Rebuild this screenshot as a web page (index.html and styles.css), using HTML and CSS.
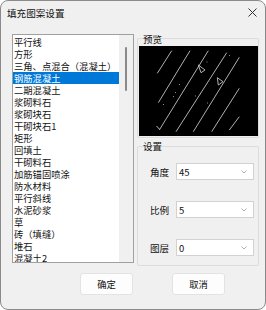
FILE: index.html
```html
<!DOCTYPE html>
<html>
<head>
<meta charset="utf-8">
<link rel="stylesheet" href="styles.css">
</head>
<body>
<div class="window">
  <div class="titlebar">
    <span class="title">填充图案设置</span>
    <svg class="close" width="9" height="9" viewBox="0 0 9 9"><path d="M0.5 0.5L8.5 8.5M8.5 0.5L0.5 8.5" stroke="#333" stroke-width="1" fill="none"/></svg>
  </div>
  <div class="body">
    <div class="list">
      <div class="items">
        <div class="item">平行线</div>
        <div class="item">方形</div>
        <div class="item">三角、点混合（混凝土）</div>
        <div class="item selected">钢筋混凝土</div>
        <div class="item">二期混凝土</div>
        <div class="item">浆砌料石</div>
        <div class="item">浆砌块石</div>
        <div class="item">干砌块石1</div>
        <div class="item">矩形</div>
        <div class="item">回填土</div>
        <div class="item">干砌料石</div>
        <div class="item">加筋锚固喷涂</div>
        <div class="item">防水材料</div>
        <div class="item">平行斜线</div>
        <div class="item">水泥砂浆</div>
        <div class="item">草</div>
        <div class="item">砖（填缝）</div>
        <div class="item">堆石</div>
        <div class="item">混凝土2</div>
      </div>
      <div class="scrollbar"><div class="thumb"></div></div>
    </div>
    <div class="right">
      <div class="group preview-group">
        <div class="legend">预览</div>
        <div class="canvas">
          <svg width="119" height="90" viewBox="0 0 119 90">
            <g stroke="#c4c4c4" stroke-width="0.9" fill="none">
              <line x1="18.3" y1="27.3" x2="32.7" y2="4.7"/>
              <line x1="19.3" y1="56.7" x2="51" y2="4.7"/>
              <line x1="20.3" y1="84" x2="69.3" y2="4.7"/>
              <line x1="37" y1="85.7" x2="87.7" y2="6.7"/>
              <line x1="54.3" y1="85.7" x2="100.3" y2="11.3"/>
              <line x1="72.7" y1="85.7" x2="100.3" y2="42.3"/>
              <line x1="90.3" y1="84" x2="100.3" y2="70.7"/>
              <line x1="17.5" y1="80" x2="20.3" y2="83"/>
              <polygon points="59.3,19 62,26.7 66,24"/>
              <polygon points="78.3,31.7 79.3,39 84,35.7"/>
            </g>
            <g fill="#8a8a8a">
              <rect x="67.5" y="15.5" width="1" height="1"/>
              <rect x="40" y="38" width="1" height="1"/>
              <rect x="34" y="50" width="1" height="1"/>
              <rect x="56" y="49.5" width="1" height="1"/>
              <rect x="68" y="56.5" width="1" height="1"/>
              <rect x="24" y="58" width="1" height="1"/>
              <rect x="90" y="9" width="1" height="1"/>
              <rect x="36" y="46" width="1" height="1"/>
            </g>
          </svg>
        </div>
      </div>
      <div class="group settings-group">
        <div class="legend">设置</div>
        <div class="row first">
          <span class="label">角度</span>
          <div class="select"><span>45</span><svg width="6" height="4" viewBox="0 0 6 4"><polyline points="0.5,0.5 3,3 5.5,0.5" stroke="#9a9a9a" stroke-width="0.8" fill="none"/></svg></div>
        </div>
        <div class="row">
          <span class="label">比例</span>
          <div class="select"><span>5</span><svg width="6" height="4" viewBox="0 0 6 4"><polyline points="0.5,0.5 3,3 5.5,0.5" stroke="#9a9a9a" stroke-width="0.8" fill="none"/></svg></div>
        </div>
        <div class="row">
          <span class="label">图层</span>
          <div class="select"><span>0</span><svg width="6" height="4" viewBox="0 0 6 4"><polyline points="0.5,0.5 3,3 5.5,0.5" stroke="#9a9a9a" stroke-width="0.8" fill="none"/></svg></div>
        </div>
      </div>
    </div>
  </div>
  <div class="footer">
    <div class="btn">确定</div>
    <div class="btn">取消</div>
  </div>
</div>
</body>
</html>
```

FILE: styles.css
```css
* { box-sizing: border-box; }
html, body {
  margin: 0;
  padding: 0;
  width: 266px;
  height: 310px;
  background: #ffffff;
  overflow: hidden;
}
body {
  font-family: "Noto Sans CJK SC", "Noto Sans", sans-serif;
  color: #1a1a1a;
  font-size: 9.3px;
}
.window {
  width: 266px;
  height: 310px;
  border: 1px solid #8a8a8a;
  border-radius: 8px;
  background: #f0f0f0;
  overflow: hidden;
  display: flex;
  flex-direction: column;
}
.titlebar {
  height: 23px;
  display: flex;
  align-items: center;
  justify-content: space-between;
  padding: 0 8px 0 6px;
}
.title {
  font-size: 9.6px;
  line-height: 12px;
  color: #111;
}
.close { display: block; margin-top: 0; }
.body {
  display: flex;
  padding: 10px 0 0 11px;
}
.list {
  width: 122px;
  height: 229px;
  border: 1px solid #a0a0a0;
  background: #ffffff;
  display: flex;
  overflow: hidden;
}
.items {
  width: 106px;
  padding-top: 1px;
  overflow: hidden;
}
.item {
  height: 12px;
  line-height: 12px;
  padding-left: 1px;
  white-space: nowrap;
  color: #111;
}
.item.selected {
  background: #0078d7;
  color: #ffffff;
}
.scrollbar {
  flex: 1;
  background: #f0f0f0;
  display: flex;
  justify-content: center;
  padding-top: 12px;
}
.thumb {
  width: 2px;
  height: 44px;
  background: #8a8a8a;
  border-radius: 1px;
}
.right {
  width: 122px;
  margin-left: 3px;
  display: flex;
  flex-direction: column;
}
.group {
  border: 1px solid #dcdcdc;
  border-radius: 2px;
}
.legend {
  font-size: 9.5px;
  line-height: 12px;
  height: 12px;
  margin-left: 5px;
  color: #111;
  align-self: flex-start;
}
.preview-group {
  margin-top: 4px;
  height: 100px;
  padding: 0 0 1px 0;
}
.preview-group .legend { margin-top: -6px; }
.canvas {
  margin: 1px 1px 0 1px;
  width: 119px;
  height: 90px;
  background: #000000;
}
.canvas svg { display: block; }
.settings-group {
  margin-top: 8px;
  height: 120px;
  display: flex;
  flex-direction: column;
}
.settings-group .legend { margin-top: -7px; }
.row {
  display: flex;
  align-items: center;
  padding-left: 12px;
  margin-top: 21px;
}
.row.first { margin-top: 11px; }
.label {
  width: 26px;
  font-size: 9.6px;
  line-height: 12px;
  color: #111;
}
.select {
  width: 78px;
  height: 17px;
  background: #ffffff;
  border: 1px solid #d2d2d2;
  display: flex;
  align-items: center;
  justify-content: space-between;
  padding: 0 6px 0 2px;
  font-size: 9.5px;
  color: #111;
}
.select svg { display: block; }
.footer {
  display: flex;
  padding: 7px 0 0 79px;
  gap: 39px;
}
.btn {
  width: 53px;
  height: 22px;
  background: #fdfdfd;
  border: 1px solid #e3e3e3;
  border-radius: 3px;
  display: flex;
  align-items: center;
  justify-content: center;
  font-size: 9.3px;
  color: #111;
}
```
